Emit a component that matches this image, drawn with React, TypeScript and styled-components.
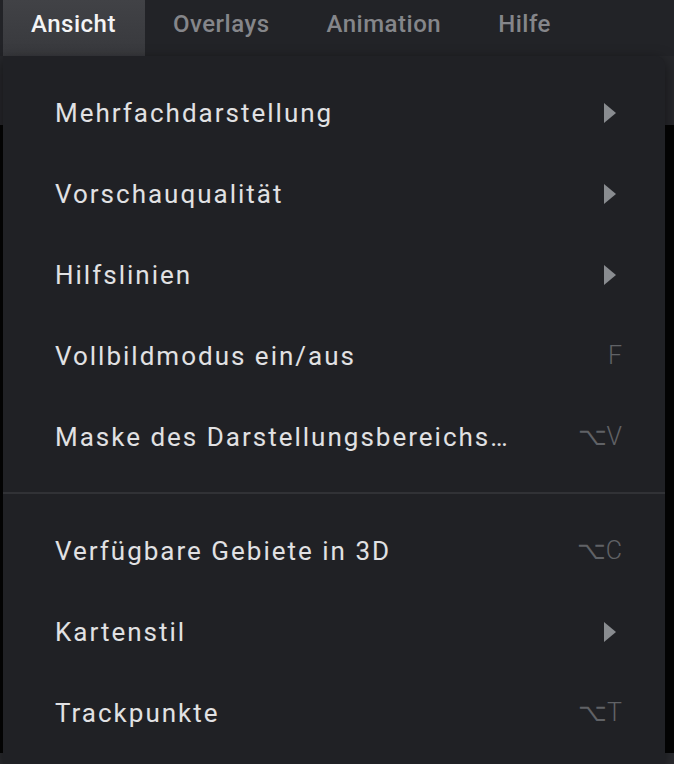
import React from "react";
import styled, { createGlobalStyle } from "styled-components";

const GlobalStyle = createGlobalStyle`
  html, body {
    margin: 0;
    padding: 0;
    background: #000;
    overflow: hidden;
  }
  #root {
    width: 674px;
    height: 764px;
  }
`;

const Screen = styled.div`
  position: relative;
  width: 674px;
  height: 764px;
  display: flex;
  flex-direction: column;
  background: #000;
  font-family: Roboto, "Liberation Sans", sans-serif;
`;

const MenuBar = styled.div`
  height: 56px;
  display: flex;
  align-items: stretch;
  padding-left: 3px;
  background: #222327;
`;

const Tab = styled.div<{ $active?: boolean }>`
  display: flex;
  align-items: center;
  padding: 0 29px 8px 28px;
  font-size: 24px;
  font-weight: 500;
  letter-spacing: 0.5px;
  color: ${(p) => (p.$active ? "#f4f4f5" : "#85868a")};
  background: ${(p) =>
    p.$active ? "linear-gradient(#414246, #38393d)" : "transparent"};
`;

const Toolbar = styled.div`
  height: 69px;
  background: #26272b;
`;

const Canvas = styled.div`
  flex: 1;
  background: #040404;
`;

const StatusBar = styled.div`
  height: 11px;
  background: #2a2b2f;
`;

const Dropdown = styled.div`
  position: absolute;
  top: 56px;
  left: 3px;
  width: 662px;
  bottom: 0;
  background: #202125;
  border-top-right-radius: 9px;
  box-shadow: 0 4px 14px rgba(0, 0, 0, 0.5);
  padding-top: 16px;
  box-sizing: border-box;
  display: flex;
  flex-direction: column;
`;

const Item = styled.div`
  height: 81px;
  flex: none;
  display: flex;
  align-items: center;
  justify-content: space-between;
  padding: 0 43px 0 52px;
`;

const Label = styled.span`
  font-size: 26px;
  font-weight: 400;
  letter-spacing: 2px;
  color: #e1e1e3;
`;

const Shortcut = styled.span`
  font-family: Roboto, "DejaVu Sans", sans-serif;
  font-size: 25px;
  font-weight: 300;
  color: #606266;
  letter-spacing: 0;
`;

const Separator = styled.div`
  height: 2px;
  flex: none;
  margin: 15px 0 16px;
  background: #313236;
`;

const Arrow = () => (
  <svg width="12" height="20" viewBox="0 0 12 20" style={{ marginRight: 6 }}>
    <path d="M0 0 L12 10 L0 20 Z" fill="#898c90" />
  </svg>
);

type Entry = { label: string; sub?: boolean; key?: string };

const groupA: Entry[] = [
  { label: "Mehrfachdarstellung", sub: true },
  { label: "Vorschauqualität", sub: true },
  { label: "Hilfslinien", sub: true },
  { label: "Vollbildmodus ein/aus", key: "F" },
  { label: "Maske des Darstellungsbereichs…", key: "⌥V" },
];

const groupB: Entry[] = [
  { label: "Verfügbare Gebiete in 3D", key: "⌥C" },
  { label: "Kartenstil", sub: true },
  { label: "Trackpunkte", key: "⌥T" },
];

const Row = ({ entry }: { entry: Entry }) => (
  <Item>
    <Label>{entry.label}</Label>
    {entry.sub ? <Arrow /> : <Shortcut>{entry.key}</Shortcut>}
  </Item>
);

const App = () => {
  return (
    <>
      <GlobalStyle />
      <Screen>
        <MenuBar>
          <Tab $active>Ansicht</Tab>
          <Tab>Overlays</Tab>
          <Tab>Animation</Tab>
          <Tab>Hilfe</Tab>
        </MenuBar>
        <Toolbar />
        <Canvas />
        <StatusBar />
        <Dropdown>
          {groupA.map((e) => (
            <Row key={e.label} entry={e} />
          ))}
          <Separator />
          {groupB.map((e) => (
            <Row key={e.label} entry={e} />
          ))}
        </Dropdown>
      </Screen>
    </>
  );
};

export default App;
